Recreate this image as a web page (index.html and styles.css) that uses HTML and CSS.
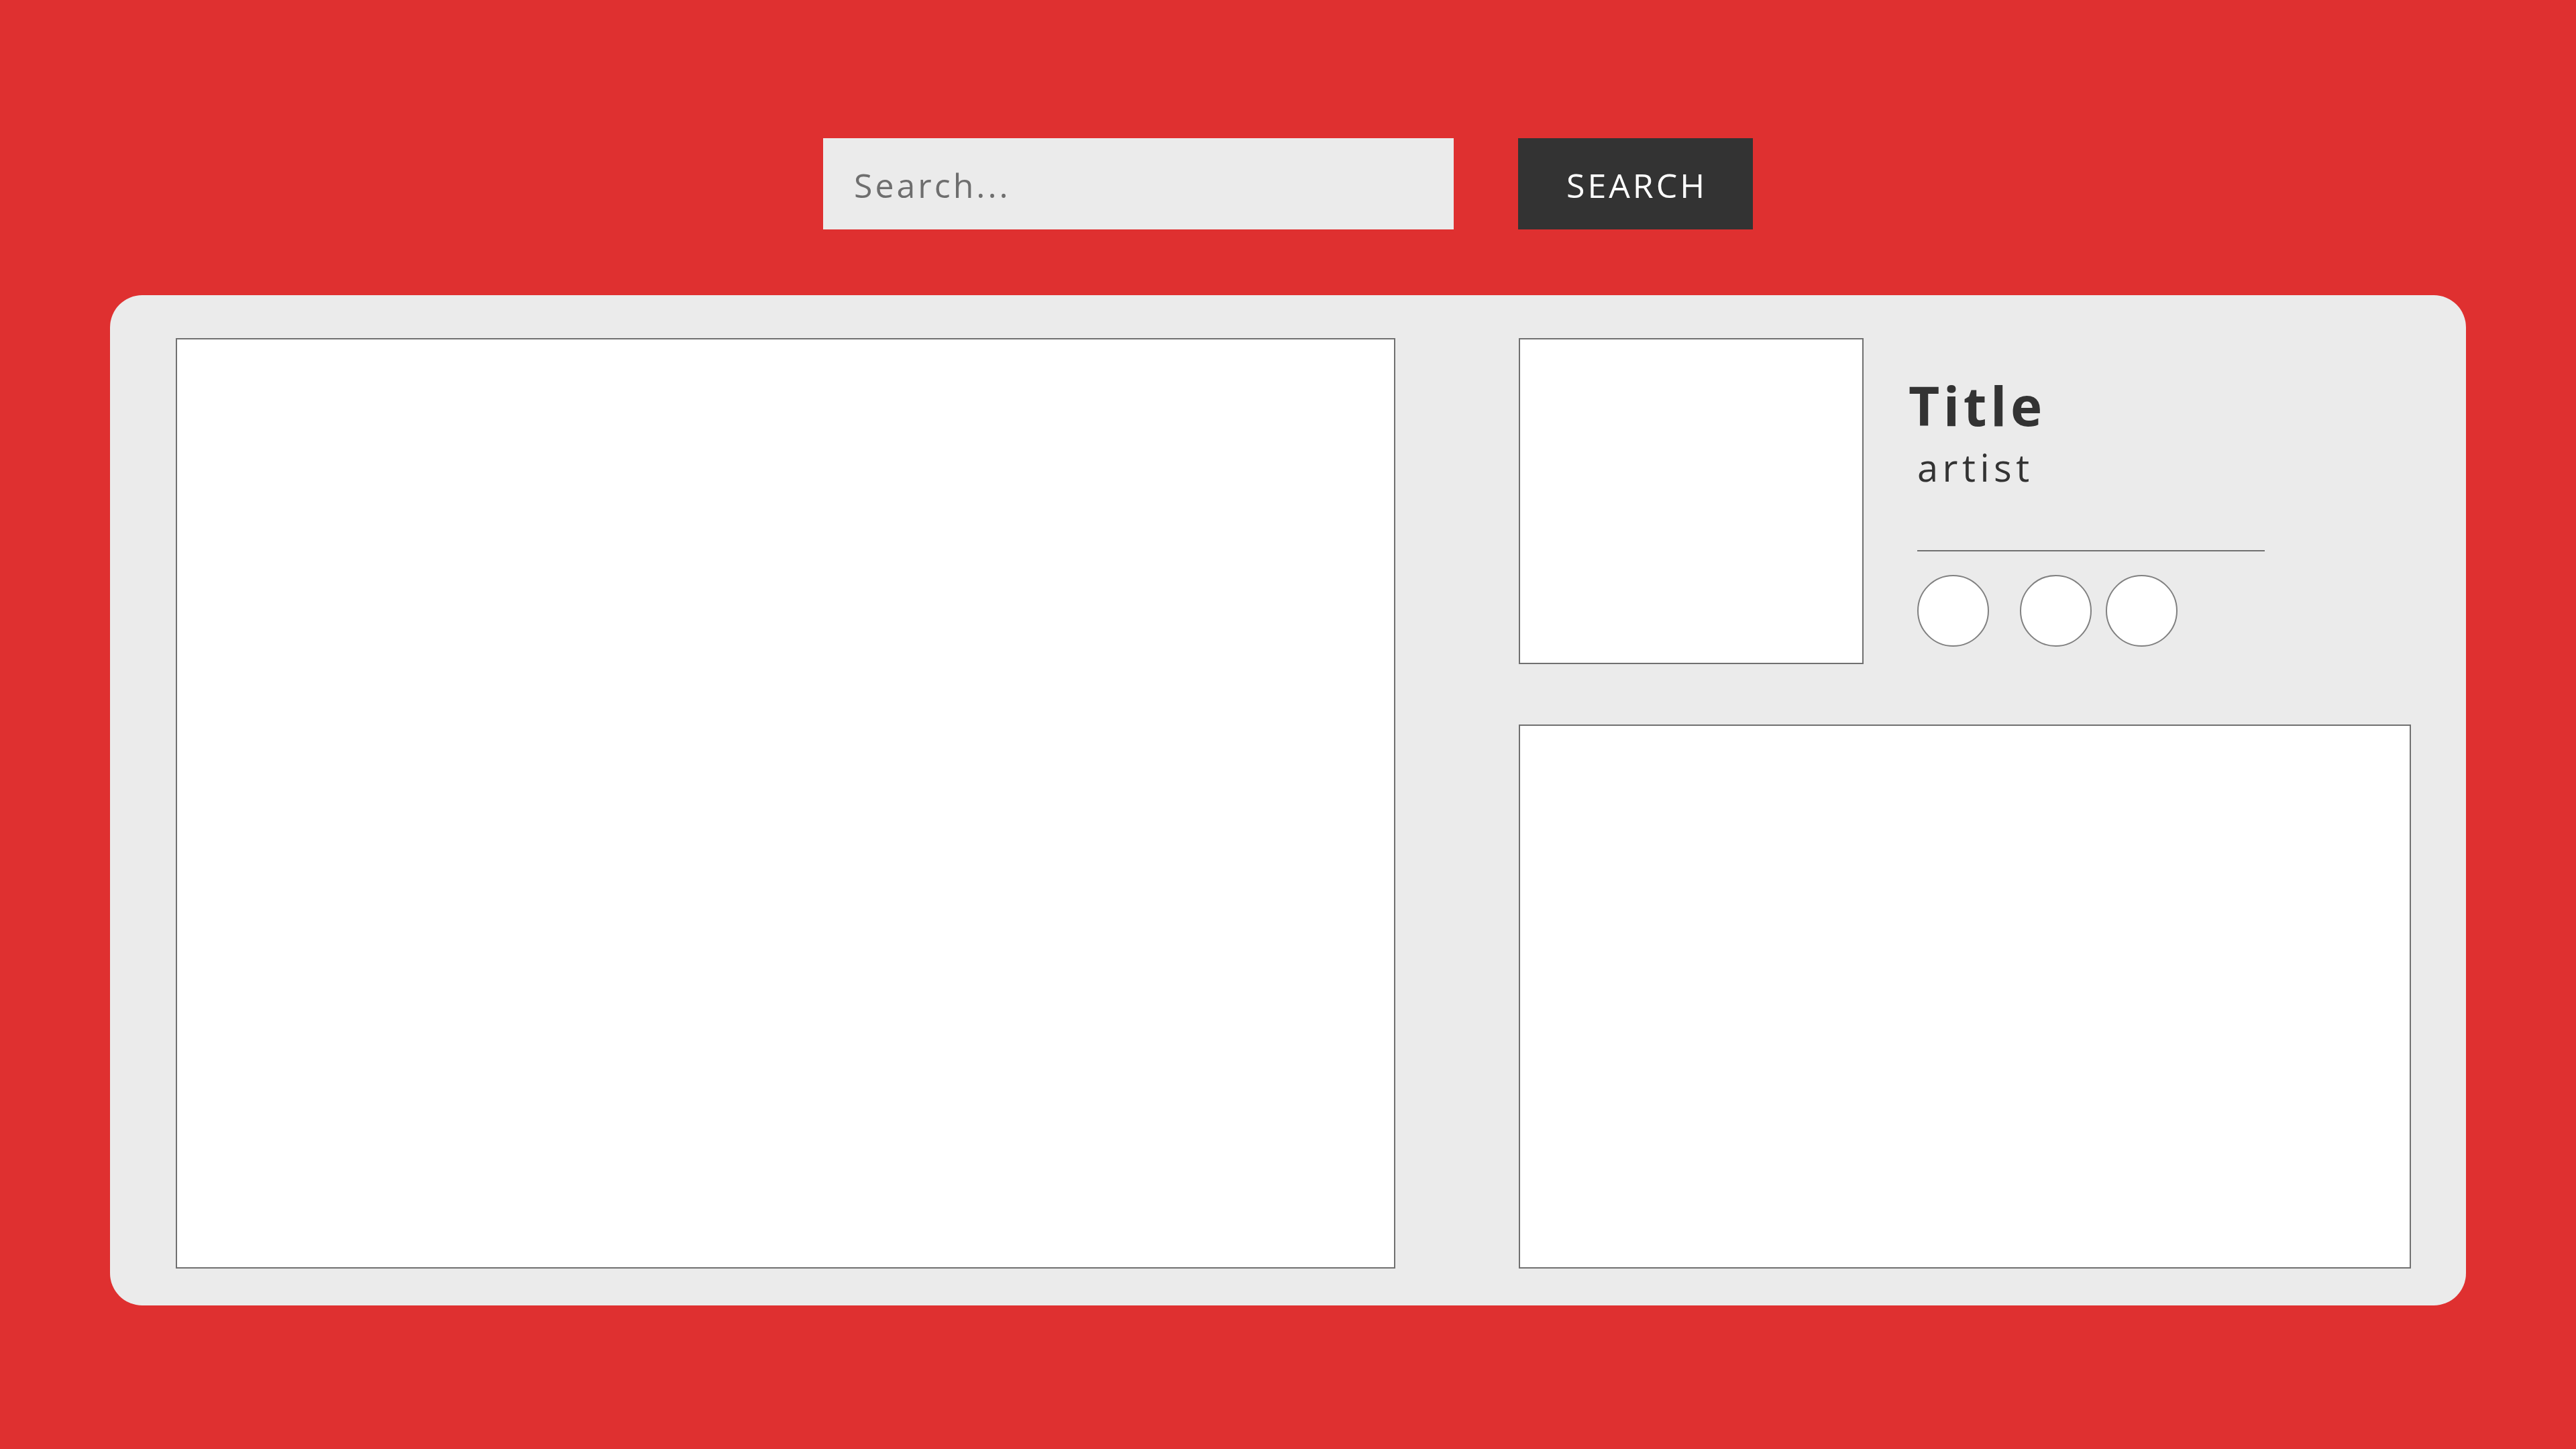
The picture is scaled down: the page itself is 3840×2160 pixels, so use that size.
FILE: index.html
```html
<!DOCTYPE html>
<html lang="en">
<head>
<meta charset="utf-8">
<title>Player</title>
<link rel="stylesheet" href="styles.css">
</head>
<body>
<header class="search-bar">
  <div class="search-input">Search...</div>
  <button class="search-btn" type="button">SEARCH</button>
</header>
<main class="card">
  <section class="main-view"></section>
  <aside class="side">
    <div class="track">
      <div class="thumb"></div>
      <div class="info">
        <h1 class="title">Title</h1>
        <p class="artist">artist</p>
        <hr class="divider">
        <div class="controls">
          <span class="dot"></span>
          <span class="dot dot-2"></span>
          <span class="dot dot-3"></span>
        </div>
      </div>
    </div>
    <section class="panel"></section>
  </aside>
</main>
</body>
</html>
```

FILE: styles.css
```css
* { box-sizing: border-box; }
html, body {
  margin: 0;
  padding: 0;
  background: #df3030;
  width: 3840px;
  height: 2160px;
  overflow: hidden;
  font-family: "Open Sans", "Liberation Sans", sans-serif;
}
.search-bar {
  display: flex;
  justify-content: center;
  align-items: stretch;
  gap: 96px;
  padding-top: 206px;
}
.search-input {
  width: 940px;
  height: 136px;
  background: #ebebeb;
  color: #6e6e6e;
  font-size: 50px;
  font-weight: 500;
  letter-spacing: 4px;
  line-height: 140px;
  padding-left: 46px;
}
.search-btn {
  width: 350px;
  height: 136px;
  border: 0;
  margin: 0;
  padding: 4px 0 0 0;
  background: #333333;
  color: #ffffff;
  font-family: "Open Sans", "Liberation Sans", sans-serif;
  font-size: 50px;
  font-weight: 500;
  letter-spacing: 4px;
  text-indent: 4px;
}
.card {
  margin: 98px 164px 0 164px;
  height: 1506px;
  background: #ebebeb;
  border-radius: 48px;
  padding: 64px 82px 55px 98px;
  display: grid;
  grid-template-columns: 1818px 1330px;
  column-gap: 184px;
}
.main-view {
  background: #ffffff;
  border: 2px solid #707070;
}
.side {
  display: flex;
  flex-direction: column;
  gap: 90px;
}
.track {
  display: flex;
  height: 486px;
  gap: 67px;
}
.thumb {
  width: 514px;
  height: 486px;
  background: #ffffff;
  border: 2px solid #707070;
}
.info {
  display: flex;
  flex-direction: column;
  align-items: flex-start;
}
.title {
  margin: 60px 0 0 0;
  font-size: 80px;
  line-height: 1;
  font-weight: 700;
  letter-spacing: 5.5px;
  color: #333333;
}
.artist {
  margin: 24px 0 0 13px;
  font-size: 56px;
  font-weight: 500;
  line-height: 1;
  letter-spacing: 6.5px;
  color: #333333;
}
.divider {
  margin: 96px 0 0 13px;
  width: 518px;
  height: 2px;
  border: 0;
  background: #707070;
}
.controls {
  display: flex;
  margin: 35px 0 0 13px;
}
.dot {
  width: 107px;
  height: 107px;
  border-radius: 50%;
  background: #ffffff;
  border: 2px solid #808080;
}
.dot-2 { margin-left: 46px; }
.dot-3 { margin-left: 21px; }
.panel {
  flex: 1;
  background: #ffffff;
  border: 2px solid #707070;
}
```
